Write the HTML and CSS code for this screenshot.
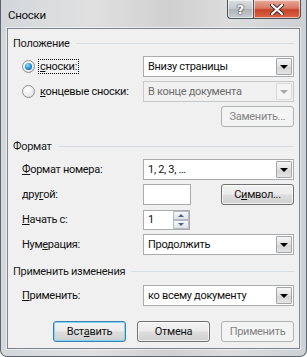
FILE: index.html
```html
<!DOCTYPE html>
<html lang="ru">
  <head>
    <meta charset="UTF-8" />
    <title>Сноски</title>
    <link rel="stylesheet" href="styles.css">
  </head>
  <body>
    <div class="window">
      <div class="titlebar">
        <span class="title">Сноски</span>
        <div class="caption-buttons">
          <span class="cap-btn help">?</span>
          <span class="cap-btn close">
            <svg width="14" height="11" viewBox="0 0 14 11">
              <path d="M2 1 L12 10 M12 1 L2 10" stroke="#3a2a28" stroke-width="4" stroke-linecap="round" />
              <path d="M2 1 L12 10 M12 1 L2 10" stroke="#fff" stroke-width="2.2" stroke-linecap="round" />
            </svg>
          </span>
        </div>
      </div>

      <div class="client">
        <div class="group-head first"><span>Положение</span></div>
        <div class="row first-row">
          <div class="label radio-label">
            <span class="radio checked"></span>
            <span class="focus"><u>с</u>носки:</span>
          </div>
          <div class="combo"><span>Внизу страницы</span><span class="arrow"></span></div>
        </div>
        <div class="row">
          <div class="label radio-label">
            <span class="radio"></span>
            <span class="text"><u>к</u>онцевые сноски:</span>
          </div>
          <div class="combo disabled"><span>В конце документа</span><span class="arrow"></span></div>
        </div>
        <div class="row right">
          <button class="btn disabled">Заменить...</button>
        </div>

        <div class="group-head"><span>Формат</span></div>
        <div class="row first-row">
          <div class="label"><u>Ф</u>ормат номера:</div>
          <div class="combo"><span>1, 2, 3, …</span><span class="arrow"></span></div>
        </div>
        <div class="row">
          <div class="label">дру<u>г</u>ой:</div>
          <div class="textbox"></div>
          <button class="btn symbol">С<u>и</u>мвол...</button>
        </div>
        <div class="row">
          <div class="label"><u>Н</u>ачать с:</div>
          <div class="spinner">
            <span>1</span>
            <div class="spin">
              <span class="spin-up"></span>
              <span class="spin-down"></span>
            </div>
          </div>
        </div>
        <div class="row">
          <div class="label">Нум<u>е</u>рация:</div>
          <div class="combo"><span>Продолжить</span><span class="arrow"></span></div>
        </div>

        <div class="group-head last"><span>Применить изменения</span></div>
        <div class="row apply-row">
          <div class="label"><u>П</u>рименить:</div>
          <div class="combo"><span>ко всему документу</span><span class="arrow"></span></div>
        </div>

        <div class="buttons">
          <button class="btn default">Вст<u>а</u>вить</button>
          <button class="btn">Отмена</button>
          <button class="btn disabled">Применить</button>
        </div>
      </div>
    </div>
  </body>
</html>
```

FILE: styles.css
```css
body {
  margin: 0;
  background: #ffffff;
  font-family: Roboto, "Noto Sans", sans-serif;
  font-size: 11px;
  letter-spacing: -0.3px;
  color: #111;
}

.window {
  width: 307px;
  height: 357px;
  box-sizing: border-box;
  border: 1px solid #5c6670;
  border-top: none;
  border-radius: 0 0 7px 7px;
  background: linear-gradient(90deg, #d3d7da 0%, #e0e0e0 30%, #d0d0d0 55%, #dcdcdc 75%, #cdd1d4 100%);
  display: flex;
  flex-direction: column;
}

.titlebar {
  height: 28px;
  display: flex;
  justify-content: space-between;
  align-items: flex-start;
  padding-left: 7px;
  padding-right: 5px;
}

.title {
  line-height: 30px;
  font-size: 11.5px;
}

.caption-buttons {
  display: flex;
}

.cap-btn {
  height: 19px;
  box-sizing: border-box;
  border: 1px solid #4b535b;
  border-top: none;
  display: flex;
  align-items: center;
  justify-content: center;
  box-shadow: inset 0 0 0 1px rgba(255, 255, 255, 0.55);
}

.help {
  width: 26px;
  border-right: none;
  border-radius: 0 0 0 4px;
  background: linear-gradient(#dcdfe2 0%, #c3c7cb 50%, #aeb3b8 51%, #c8ccd0 100%);
  color: #fff;
  font-family: "DejaVu Sans", sans-serif;
  font-weight: bold;
  font-size: 13px;
  letter-spacing: 0;
  text-shadow: 0 0 2px #333, 0 0 1px #333;
}

.close {
  width: 48px;
  border-radius: 0 0 4px 0;
  background: linear-gradient(#e7ab9c 0%, #d97a63 45%, #c8432a 55%, #d9684a 100%);
}

.client {
  flex: 1;
  margin: 0 6px 7px 6px;
  background: #f0f0f0;
  border: 1px solid #7a8591;
  box-shadow: 0 0 0 1px rgba(255, 255, 255, 0.5);
  display: flex;
  flex-direction: column;
  padding: 0 5px 0 0;
}

.group-head {
  display: flex;
  align-items: center;
  height: 16px;
  margin-top: 11px;
  padding-left: 5px;
  color: #1a1a1a;
}

.group-head.first {
  margin-top: 6px;
}

.group-head.last {
  margin-top: 8px;
}

.group-head::after {
  content: "";
  flex: 1;
  margin-left: 6px;
  border-top: 1px solid #d5dce2;
}

.row {
  display: flex;
  align-items: center;
  height: 21px;
  margin-top: 4px;
  padding-left: 14px;
}

.row.first-row {
  margin-top: 5px;
}

.row.apply-row {
  margin-top: 6px;
}

.row.right {
  justify-content: flex-end;
}

.label {
  width: 121px;
  flex: none;
}

.radio-label {
  display: flex;
  align-items: center;
  gap: 4px;
}

.radio {
  width: 13px;
  height: 13px;
  box-sizing: border-box;
  border-radius: 50%;
  border: 1px solid #8b9096;
  background: radial-gradient(circle at 40% 35%, #ffffff 0%, #ececec 55%, #d0d2d4 100%);
  display: flex;
  align-items: center;
  justify-content: center;
}

.radio.checked::after {
  content: "";
  width: 7px;
  height: 7px;
  border-radius: 50%;
  background: radial-gradient(circle at 40% 35%, #9fe2ff 0%, #2a9ae0 45%, #0b4d8c 100%);
}

.focus {
  outline: 1px dotted #000;
  padding: 0 1px;
}

.text {
  padding: 0 1px;
}

.combo {
  width: 151px;
  height: 21px;
  box-sizing: border-box;
  border: 1px solid #a9abad;
  background: #fff;
  display: flex;
  align-items: center;
  justify-content: space-between;
  padding-left: 4px;
}

.combo .arrow {
  width: 16px;
  height: 17px;
  margin-right: 1px;
  box-sizing: border-box;
  border: 1px solid #a3a6a9;
  border-radius: 1px;
  background: linear-gradient(#f6f6f6, #e1e1e1 50%, #d3d3d3 51%, #e4e4e4);
  display: flex;
  align-items: center;
  justify-content: center;
}

.combo .arrow::after {
  content: "";
  border-left: 4px solid transparent;
  border-right: 4px solid transparent;
  border-top: 4px solid #000;
}

.combo.disabled {
  background: #f0f0f0;
  border-color: #c6c8ca;
  color: #6d6d6d;
}

.combo.disabled .arrow {
  background: #f4f4f4;
  border-color: #dadada;
}

.combo.disabled .arrow::after {
  border-top-color: #a8a8a8;
}

.textbox {
  width: 48px;
  height: 21px;
  box-sizing: border-box;
  border: 1px solid #a9abad;
  background: #fff;
}

.spinner {
  width: 47px;
  height: 20px;
  box-sizing: border-box;
  border: 1px solid #a9abad;
  background: #fff;
  display: flex;
  align-items: center;
  justify-content: space-between;
  padding-left: 4px;
}

.spin {
  width: 16px;
  height: 18px;
  display: flex;
  flex-direction: column;
}

.spin span {
  flex: 1;
  box-sizing: border-box;
  border: 1px solid #b4bac2;
  background: linear-gradient(#f6f7f9, #dfe3e8);
  display: flex;
  align-items: center;
  justify-content: center;
}

.spin-up::after {
  content: "";
  border-left: 3px solid transparent;
  border-right: 3px solid transparent;
  border-bottom: 3px solid #4c6488;
}

.spin-down::after {
  content: "";
  border-left: 3px solid transparent;
  border-right: 3px solid transparent;
  border-top: 3px solid #4c6488;
}

.btn {
  width: 73px;
  height: 21px;
  box-sizing: border-box;
  border: 1px solid #707070;
  border-radius: 3px;
  background: linear-gradient(#f2f2f2 0%, #ebebeb 48%, #dddddd 52%, #cfcfcf 100%);
  box-shadow: inset 0 0 0 1px rgba(255, 255, 255, 0.7);
  font-family: Roboto, "Noto Sans", sans-serif;
  font-size: 11px;
  letter-spacing: -0.3px;
  color: #111;
  padding: 0;
}

.btn.symbol {
  margin-left: auto;
}

.btn.default {
  border-color: #3c7fb1;
  box-shadow: inset 0 0 0 1px #7fd6f5;
}

.btn.disabled {
  border-color: #adb2b5;
  background: #f4f4f4;
  box-shadow: none;
  color: #838383;
}

.buttons {
  display: flex;
  justify-content: flex-end;
  gap: 11px;
  margin-top: 15px;
}
```
